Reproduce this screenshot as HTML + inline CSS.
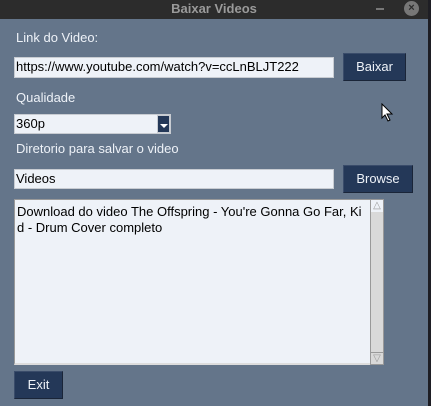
<!DOCTYPE html><html><head><style>
body{margin:0;width:431px;height:406px;overflow:hidden;background:#64758a;font-family:"Liberation Sans",sans-serif;position:relative}
.a{position:absolute;box-sizing:border-box}
.t{background:#2c2c2c;left:0;top:0;width:428px;height:19px;color:#9a9a9a;font-weight:bold;font-size:13px;text-align:center;line-height:17px}
.lbl{color:#eef2f8;font-size:13px}
.ent{background:#eef2f8;border:1px solid #c8ccd2;font-size:13px;color:#000;line-height:17px;padding-left:1px}
.btn{background:#243858;border:1px solid #3a4c6a;border-right-color:#1a2538;border-bottom-color:#1a2538;color:#eef2f8;font-size:13px;text-align:center}
</style></head><body>
<div class="a t">Baixar Videos</div>
<div class="a" style="left:376px;top:8px;width:8px;height:2px;background:#777"></div>
<div class="a" style="left:404px;top:1px;width:15px;height:15px;border-radius:50%;background:#777;color:#2c2c2c;font-size:11px;font-weight:bold;text-align:center;line-height:15px">×</div>
<div class="a" style="left:428px;top:0;width:3px;height:406px;background:#1e1e24"></div>
<div class="a lbl" style="left:16px;top:30px">Link do Video:</div>
<div class="a ent" style="left:14px;top:57px;width:320px;height:21px">https://www.youtube.com/watch?v=ccLnBLJT222</div>
<div class="a btn" style="left:343px;top:53px;width:63px;height:28px;line-height:26px">Baixar</div>
<div class="a lbl" style="left:16px;top:90px">Qualidade</div>
<div class="a ent" style="left:14px;top:114px;width:157px;height:20px">360p</div>
<div class="a" style="left:157px;top:115px;width:13px;height:18px;background:#243858;border:1px solid #c8ccd2"><div class="a" style="left:2px;top:8px;border-left:4px solid transparent;border-right:4px solid transparent;border-top:4px solid #fff"></div></div>
<div class="a lbl" style="left:16px;top:141px">Diretorio para salvar o video</div>
<div class="a ent" style="left:14px;top:169px;width:320px;height:20px">Videos</div>
<div class="a btn" style="left:343px;top:165px;width:70px;height:28px;line-height:26px">Browse</div>
<div class="a ent" style="left:14px;top:199px;width:356px;height:166px;border:1px solid #999;border-right:none;border-bottom:2px solid #ddd;padding:4px 2px;line-height:16px">Download do video The Offspring - You're Gonna Go Far, Ki<br>d - Drum Cover completo</div>
<div class="a" style="left:370px;top:199px;width:14px;height:166px;background:#d9d9d9;border:1px solid #999"></div>
<div class="a" style="left:371px;top:200px;width:12px;height:12px;background:#eef2f8;color:#999;font-size:10px;text-align:center;line-height:12px">△</div>
<div class="a" style="left:371px;top:352px;width:12px;height:12px;background:#d9d9d9;border-top:1px solid #999;color:#999;font-size:10px;text-align:center;line-height:12px">▽</div>
<div class="a btn" style="left:14px;top:371px;width:49px;height:28px;line-height:26px">Exit</div>
<svg class="a" style="left:381px;top:103px" width="14" height="20"><path d="M1 1 L1 15 L4 12 L7 18 L9 17 L6 11 L11 11 Z" fill="#fff" stroke="#000"/></svg>
</body></html>
